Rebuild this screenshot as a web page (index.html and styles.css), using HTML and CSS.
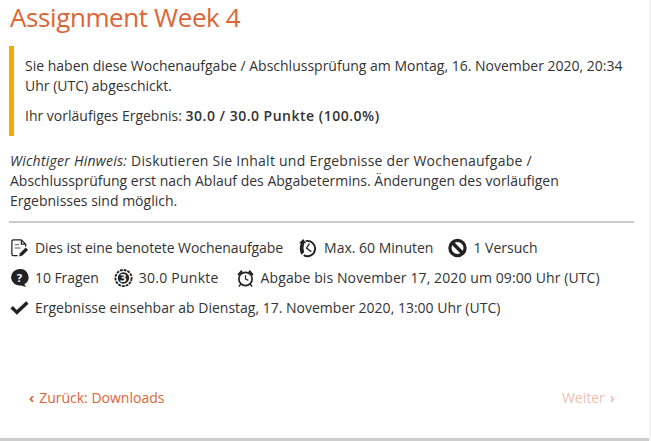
FILE: index.html
```html
<!DOCTYPE html>
<html lang="de">
<head>
    <meta charset="UTF-8">
    <meta name="viewport" content="width=device-width, initial-scale=1.0">
    <title>Assignment Week 4</title>
    <link rel="stylesheet" href="styles.css">
</head>
<body>
    <div class="page">
        <h1 class="title">Assignment Week 4</h1>

        <div class="notice">
            <p>Sie haben diese Wochenaufgabe / Abschlussprüfung am Montag, 16. November 2020, 20:34 Uhr (UTC) abgeschickt.</p>
            <p>Ihr vorläufiges Ergebnis: <span class="score">30.0 / 30.0 Punkte (100.0%)</span></p>
        </div>

        <p class="hint"><em>Wichtiger Hinweis:</em> Diskutieren Sie Inhalt und Ergebnisse der Wochenaufgabe / Abschlussprüfung erst nach Ablauf des Abgabetermins. Änderungen des vorläufigen Ergebnisses sind möglich.</p>

        <div class="facts">
            <div class="fact-row">
                <span class="fact tight">
                    <svg class="icon" viewBox="0 0 20 20"><path d="M12 1.500H3.500Q2 1.500 2 3V16.500Q2 18 3.500 18H8M12 1.500L16.500 6V8.500M12 1.500V6H16.500" fill="none" stroke="#222" stroke-width="1.300"/><path d="M5 6.500H9.500M5 10H11" stroke="#222" stroke-width=".8"/><path d="M9.500 19L10.500 15.500L16.500 9.500L19 12L13 18Z" fill="#222"/></svg>
                    Dies ist eine benotete Wochenaufgabe
                </span>
                <span class="fact roomy">
                    <svg class="icon" viewBox="0 0 20 20"><path d="M8 2.800A8 8 0 1 1 6 17.500" fill="none" stroke="#222" stroke-width="2"/><path d="M12 5.500L9 10L14 14" fill="none" stroke="#222" stroke-width="1.400"/><path d="M1 5L5.500 .500L8.500 5H6.500Q5 10 6.500 14.500L3.500 17Q.500 11 3 5Z" fill="#222"/></svg>
                    Max. 60 Minuten
                </span>
                <span class="fact">
                    <svg class="icon" viewBox="0 0 20 20"><circle cx="10" cy="10" r="8" fill="none" stroke="#222" stroke-width="3.400"/><path d="M4.500 4.500L15.500 15.500" stroke="#222" stroke-width="3.600"/></svg>
                    1 Versuch
                </span>
            </div>
            <div class="fact-row">
                <span class="fact tight">
                    <svg class="icon" viewBox="0 0 20 20"><path d="M10 .500A9 8.700 0 0 1 15 16.700L17 19.500L11.500 17.800A9 8.700 0 1 1 10 .500Z" fill="#222"/><text x="10" y="14" class="icon-mark">?</text></svg>
                    10 Fragen
                </span>
                <span class="fact points">
                    <svg class="icon" viewBox="0 0 20 20"><circle cx="10" cy="10" r="8.500" fill="none" stroke="#222" stroke-width="2" stroke-dasharray="3 1"/><circle cx="10" cy="10" r="6" fill="#222"/><text x="10" y="14" class="icon-mark">3</text></svg>
                    30.0 Punkte
                </span>
                <span class="fact due">
                    <svg class="icon" viewBox="0 0 20 20"><circle cx="10" cy="11" r="7" fill="none" stroke="#222" stroke-width="1.800"/><path d="M10 7V11L13 12.500" fill="none" stroke="#222" stroke-width="1.300"/><path d="M1.500 6L5.500 1.500L7 3.500L3 7.500ZM18.500 6L14.500 1.500L13 3.500L17 7.500Z" fill="#222"/><path d="M5 16.500L3 19M15 16.500L17 19" stroke="#222" stroke-width="1.500"/></svg>
                    Abgabe bis November 17, 2020 um 09:00 Uhr (UTC)
                </span>
            </div>
            <div class="fact-row">
                <span class="fact">
                    <svg class="icon" viewBox="0 0 20 20"><path d="M.500 10.500L3 8L7.200 12L17 3L19.500 5.500L7.200 17Z" fill="#222"/></svg>
                    Ergebnisse einsehbar ab Dienstag, 17. November 2020, 13:00 Uhr (UTC)
                </span>
            </div>
        </div>

        <div class="pager">
            <a class="pager-link" href="#"><span class="chev">‹</span>Zurück: Downloads</a>
            <a class="pager-link disabled" href="#">Weiter<span class="chev next">›</span></a>
        </div>
    </div>
</body>
</html>
```

FILE: styles.css
```css
html, body {
    height: 100%;
}

body {
    margin: 0;
    background: #f5f5f5;
    font-family: "Open Sans", "Liberation Sans", sans-serif;
    color: #333;
    overflow: hidden;
}

.page {
    box-sizing: border-box;
    width: 649px;
    height: 441px;
    padding: 0 15px 0 9px;
    background: #fff;
    border-bottom: 3px solid #ccc;
    display: flex;
    flex-direction: column;
}

.title {
    margin: 2px 0 0 1px;
    font-size: 26px;
    line-height: 30px;
    font-weight: 400;
    letter-spacing: -0.4px;
    color: #dd6536;
}

.notice {
    margin-top: 14px;
    padding: 10px 0 10px 11px;
    border-left: 5px solid #f2ac00;
    font-size: 14px;
    line-height: 20px;
}

.notice p {
    margin: 0;
}

.notice p + p {
    margin-top: 10px;
}

.score {
    font-weight: 600;
    letter-spacing: 0.5px;
}

.hint {
    margin: 15px 0 0 1px;
    font-size: 14px;
    line-height: 20px;
}

.hint::first-line {
    letter-spacing: 0.25px;
}

.facts {
    margin-top: 10px;
    padding-top: 15px;
    border-top: 2px solid #ccc;
    font-size: 14px;
}

.fact-row {
    display: flex;
    gap: 15px;
    height: 30px;
    padding-left: 1px;
    align-items: flex-start;
}

.fact {
    display: flex;
    align-items: center;
    gap: 6px;
    line-height: 20px;
}

.tight {
    letter-spacing: -0.08px;
}

.roomy {
    gap: 7px;
}

.points {
    letter-spacing: 0.25px;
}

.due {
    margin-left: 2px;
    letter-spacing: 0.1px;
}

.icon {
    width: 19px;
    height: 20px;
}

.icon-mark {
    font-size: 12px;
    font-weight: 700;
    fill: #fff;
    text-anchor: middle;
}

.pager {
    margin-top: auto;
    margin-bottom: 30px;
    padding: 0 19px 0 20px;
    display: flex;
    justify-content: space-between;
    font-size: 14px;
    line-height: 20px;
}

.pager-link {
    color: #dd6536;
    text-decoration: none;
}

.disabled {
    opacity: 0.4;
}

.chev {
    font-weight: 700;
    margin-right: 5px;
}

.next {
    margin: 0 0 0 5px;
}
```
